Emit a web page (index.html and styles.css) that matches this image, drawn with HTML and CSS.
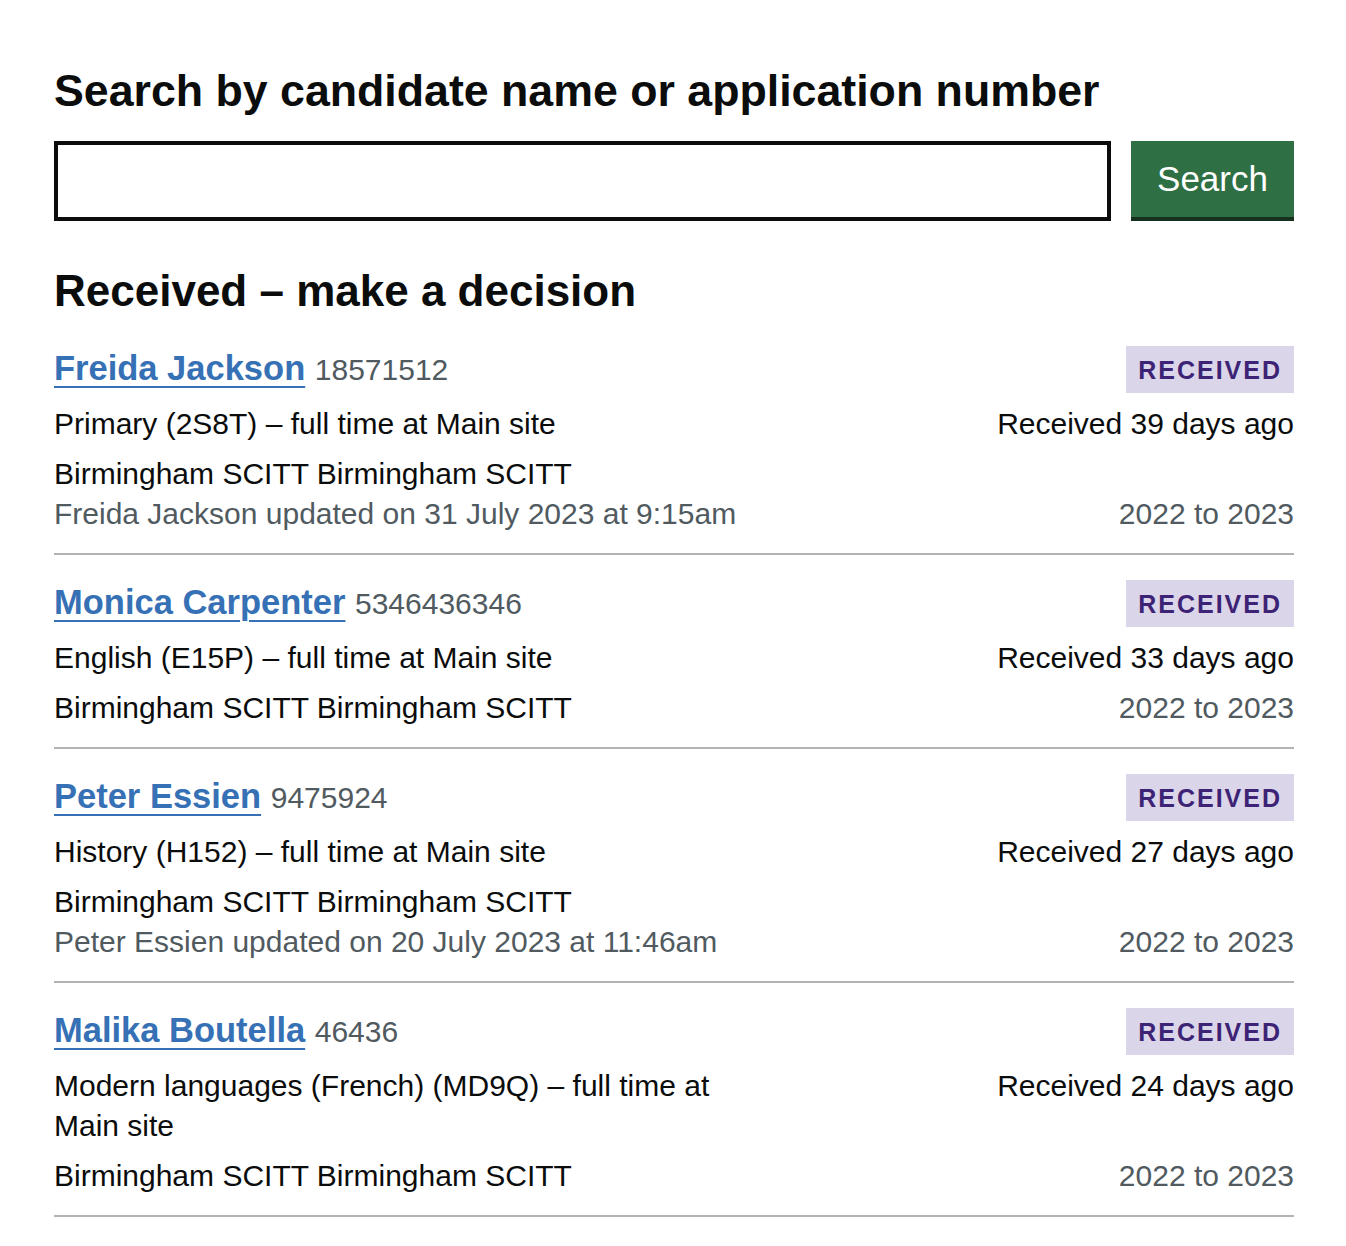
FILE: index.html
```html
<!DOCTYPE html>
<html lang="en">
<head>
<meta charset="utf-8">
<title>Applications</title>
<link rel="stylesheet" href="styles.css">
</head>
<body>
<main class="page">
  <form class="search" action="#">
    <label class="search-label" for="q">Search by candidate name or application number</label>
    <div class="search-row">
      <input id="q" class="search-input" type="text">
      <button class="search-button" type="button">Search</button>
    </div>
  </form>

  <h2 class="section-title">Received – make a decision</h2>

  <ul class="app-list">
    <li class="app-row">
      <div class="app-main">
        <p class="app-name"><a class="app-link" href="#">Freida Jackson</a> <span class="app-id">18571512</span></p>
        <p class="app-course">Primary (2S8T) – full time at Main site</p>
        <p class="app-provider">Birmingham SCITT Birmingham SCITT</p>
        <p class="app-updated">Freida Jackson updated on 31 July 2023 at 9:15am</p>
      </div>
      <div class="app-side">
        <strong class="tag">Received</strong>
        <p class="app-received">Received 39 days ago</p>
        <p class="app-year">2022 to 2023</p>
      </div>
    </li>
    <li class="app-row">
      <div class="app-main">
        <p class="app-name"><a class="app-link" href="#">Monica Carpenter</a> <span class="app-id">5346436346</span></p>
        <p class="app-course">English (E15P) – full time at Main site</p>
        <p class="app-provider">Birmingham SCITT Birmingham SCITT</p>
      </div>
      <div class="app-side">
        <strong class="tag">Received</strong>
        <p class="app-received">Received 33 days ago</p>
        <p class="app-year">2022 to 2023</p>
      </div>
    </li>
    <li class="app-row">
      <div class="app-main">
        <p class="app-name"><a class="app-link" href="#">Peter Essien</a> <span class="app-id">9475924</span></p>
        <p class="app-course">History (H152) – full time at Main site</p>
        <p class="app-provider">Birmingham SCITT Birmingham SCITT</p>
        <p class="app-updated">Peter Essien updated on 20 July 2023 at 11:46am</p>
      </div>
      <div class="app-side">
        <strong class="tag">Received</strong>
        <p class="app-received">Received 27 days ago</p>
        <p class="app-year">2022 to 2023</p>
      </div>
    </li>
    <li class="app-row">
      <div class="app-main">
        <p class="app-name"><a class="app-link" href="#">Malika Boutella</a> <span class="app-id">46436</span></p>
        <p class="app-course">Modern languages (French) (MD9Q) – full time at Main site</p>
        <p class="app-provider">Birmingham SCITT Birmingham SCITT</p>
      </div>
      <div class="app-side">
        <strong class="tag">Received</strong>
        <p class="app-received">Received 24 days ago</p>
        <p class="app-year">2022 to 2023</p>
      </div>
    </li>
  </ul>
</main>
</body>
</html>
```

FILE: styles.css
```css
* {
  box-sizing: border-box;
}

html, body {
  margin: 0;
  padding: 0;
  background: #ffffff;
}

body {
  font-family: "Liberation Sans", Arial, sans-serif;
  color: #0b0c0c;
  font-size: 30px;
  line-height: 40px;
}

p {
  margin: 0;
}

.page {
  padding: 66px 52px 0 54px;
}

.search {
  margin: 0;
}

.search-label {
  display: block;
  font-size: 44.7px;
  line-height: 50px;
  font-weight: 700;
  margin-bottom: 25px;
}

.search-row {
  display: flex;
  align-items: flex-start;
  gap: 20px;
}

.search-input {
  flex: 1;
  height: 80px;
  border: 4px solid #0b0c0c;
  border-radius: 0;
  margin: 0;
  padding: 0 10px;
  font: inherit;
  background: #ffffff;
}

.search-button {
  width: 163px;
  height: 76px;
  margin: 0 0 4px;
  padding: 0;
  border: 0;
  border-radius: 0;
  background: #2f6f44;
  box-shadow: 0 4px 0 #17311f;
  color: #ffffff;
  font-family: inherit;
  font-size: 35px;
  line-height: 76px;
  font-weight: 400;
  cursor: pointer;
}

.section-title {
  margin: 45px 0 5px;
  font-size: 44px;
  line-height: 50px;
  font-weight: 700;
}

.app-list {
  list-style: none;
  margin: 0;
  padding: 0;
}

.app-row {
  display: flex;
  justify-content: space-between;
  padding: 24px 0 19px;
  border-bottom: 2px solid #b1b4b6;
}

.app-main {
  max-width: 700px;
}

.app-name {
  height: 46px;
  font-size: 34.5px;
  line-height: 46px;
  font-weight: 700;
  margin-bottom: 13px;
  white-space: nowrap;
}

.app-link {
  color: #3670b5;
  text-decoration: underline;
  text-decoration-thickness: 2px;
  text-underline-offset: 6px;
}

.app-id {
  font-size: 30px;
  line-height: 1;
  font-weight: 400;
  color: #505a5f;
}

.app-provider {
  margin-top: 10px;
}

.app-updated {
  color: #505a5f;
}

.app-side {
  display: flex;
  flex-direction: column;
  align-items: flex-end;
  text-align: right;
  white-space: nowrap;
}

.tag {
  display: inline-block;
  margin-top: 1px;
  padding: 2px 12px 0;
  height: 47px;
  line-height: 45px;
  font-size: 25px;
  font-weight: 700;
  letter-spacing: 2px;
  text-transform: uppercase;
  background: #dbd5e9;
  color: #3d2375;
}

.app-received {
  margin-top: 11px;
}

.app-year {
  margin-top: auto;
  color: #505a5f;
}
```
